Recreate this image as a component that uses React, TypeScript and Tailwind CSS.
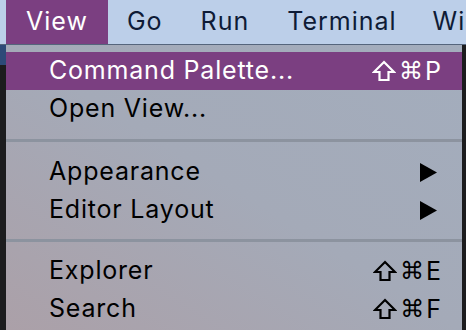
import React from 'react';

type Item =
  | { kind: 'item'; label: string; shortcut?: string; submenu?: boolean; active?: boolean }
  | { kind: 'sep'; pad: string };

const ITEMS: Item[] = [
  { kind: 'item', label: 'Command Palette...', shortcut: 'P', active: true },
  { kind: 'item', label: 'Open View...' },
  { kind: 'sep', pad: 'py-[11px]' },
  { kind: 'item', label: 'Appearance', submenu: true },
  { kind: 'item', label: 'Editor Layout', submenu: true },
  { kind: 'sep', pad: 'pt-[10px] pb-[10px]' },
  { kind: 'item', label: 'Explorer', shortcut: 'E' },
  { kind: 'item', label: 'Search', shortcut: 'F' },
];

const font = { fontFamily: 'Inter, "Noto Sans", sans-serif' };

const ShiftIcon: React.FC<{ light?: boolean }> = ({ light }) => (
  <svg width="24" height="22" viewBox="0 0 24 22" className="mr-[3px]">
    <path
      d="M12 2 L22 12 L16.5 12 L16.5 20 L7.5 20 L7.5 12 L2 12 Z"
      fill="none"
      stroke={light ? '#ffffff' : '#000000'}
      strokeWidth="2.2"
      strokeLinejoin="miter"
    />
  </svg>
);

const Shortcut: React.FC<{ k: string; light?: boolean }> = ({ k, light }) => (
  <div className={`flex items-center ${light ? 'text-white' : 'text-black'}`}>
    <ShiftIcon light={light} />
    <span className="text-[24px] leading-none" style={{ fontFamily: '"DejaVu Sans", sans-serif' }}>⌘</span>
    <span className="text-[25px] leading-none ml-[2px]">{k}</span>
  </div>
);

const App: React.FC = () => {
  return (
    <div className="w-[466px] h-[330px] overflow-hidden bg-[#1c1c1e] flex flex-col" style={font}>
      {/* Menu bar */}
      <div className="h-[44px] bg-[#bccfe9] flex items-stretch pl-[6px] text-[25px] tracking-[1px] text-[#0e1b36] shrink-0">
        <div className="bg-[#7b3f81] text-white px-[20px] flex items-center">View</div>
        <div className="px-[19px] flex items-center">Go</div>
        <div className="px-[19px] flex items-center">Run</div>
        <div className="px-[19px] flex items-center">Terminal</div>
        <div className="px-[17px] flex items-center">Wi</div>
      </div>
      <div className="h-px bg-[#55657c] shrink-0" />

      <div className="flex flex-1">
        <div className="w-[6px] bg-[#1c1c1e] flex flex-col">
          <div className="h-[20px] bg-[#2d4a78]" />
        </div>
        {/* Dropdown */}
        <div className="w-[456px] bg-gradient-to-tr from-[#aba0a8] via-[#a4aab8] to-[#a3adbd] pt-[7px] flex flex-col">
          {ITEMS.map((it, i) =>
            it.kind === 'sep' ? (
              <div key={i} className={it.pad}>
                <div className="h-[3px] bg-[#8c939f]" />
              </div>
            ) : (
              <div
                key={i}
                className={`h-[38px] flex items-center justify-between pl-[43px] pr-[21px] text-[25px] ${
                  it.active ? 'bg-[#7b3f81] text-white' : 'text-black'
                }`}
              >
                <span className="tracking-[0.8px]">{it.label}</span>
                {it.shortcut && <Shortcut k={it.shortcut} light={it.active} />}
                {it.submenu && (
                  <svg width="17" height="19" viewBox="0 0 17 19" className="mr-[4px]">
                    <path d="M0 0 L17 9.5 L0 19 Z" fill="#000" />
                  </svg>
                )}
              </div>
            )
          )}
        </div>
        <div className="w-[4px] bg-[#1c1c1e]" />
      </div>
    </div>
  );
};

export default App;
